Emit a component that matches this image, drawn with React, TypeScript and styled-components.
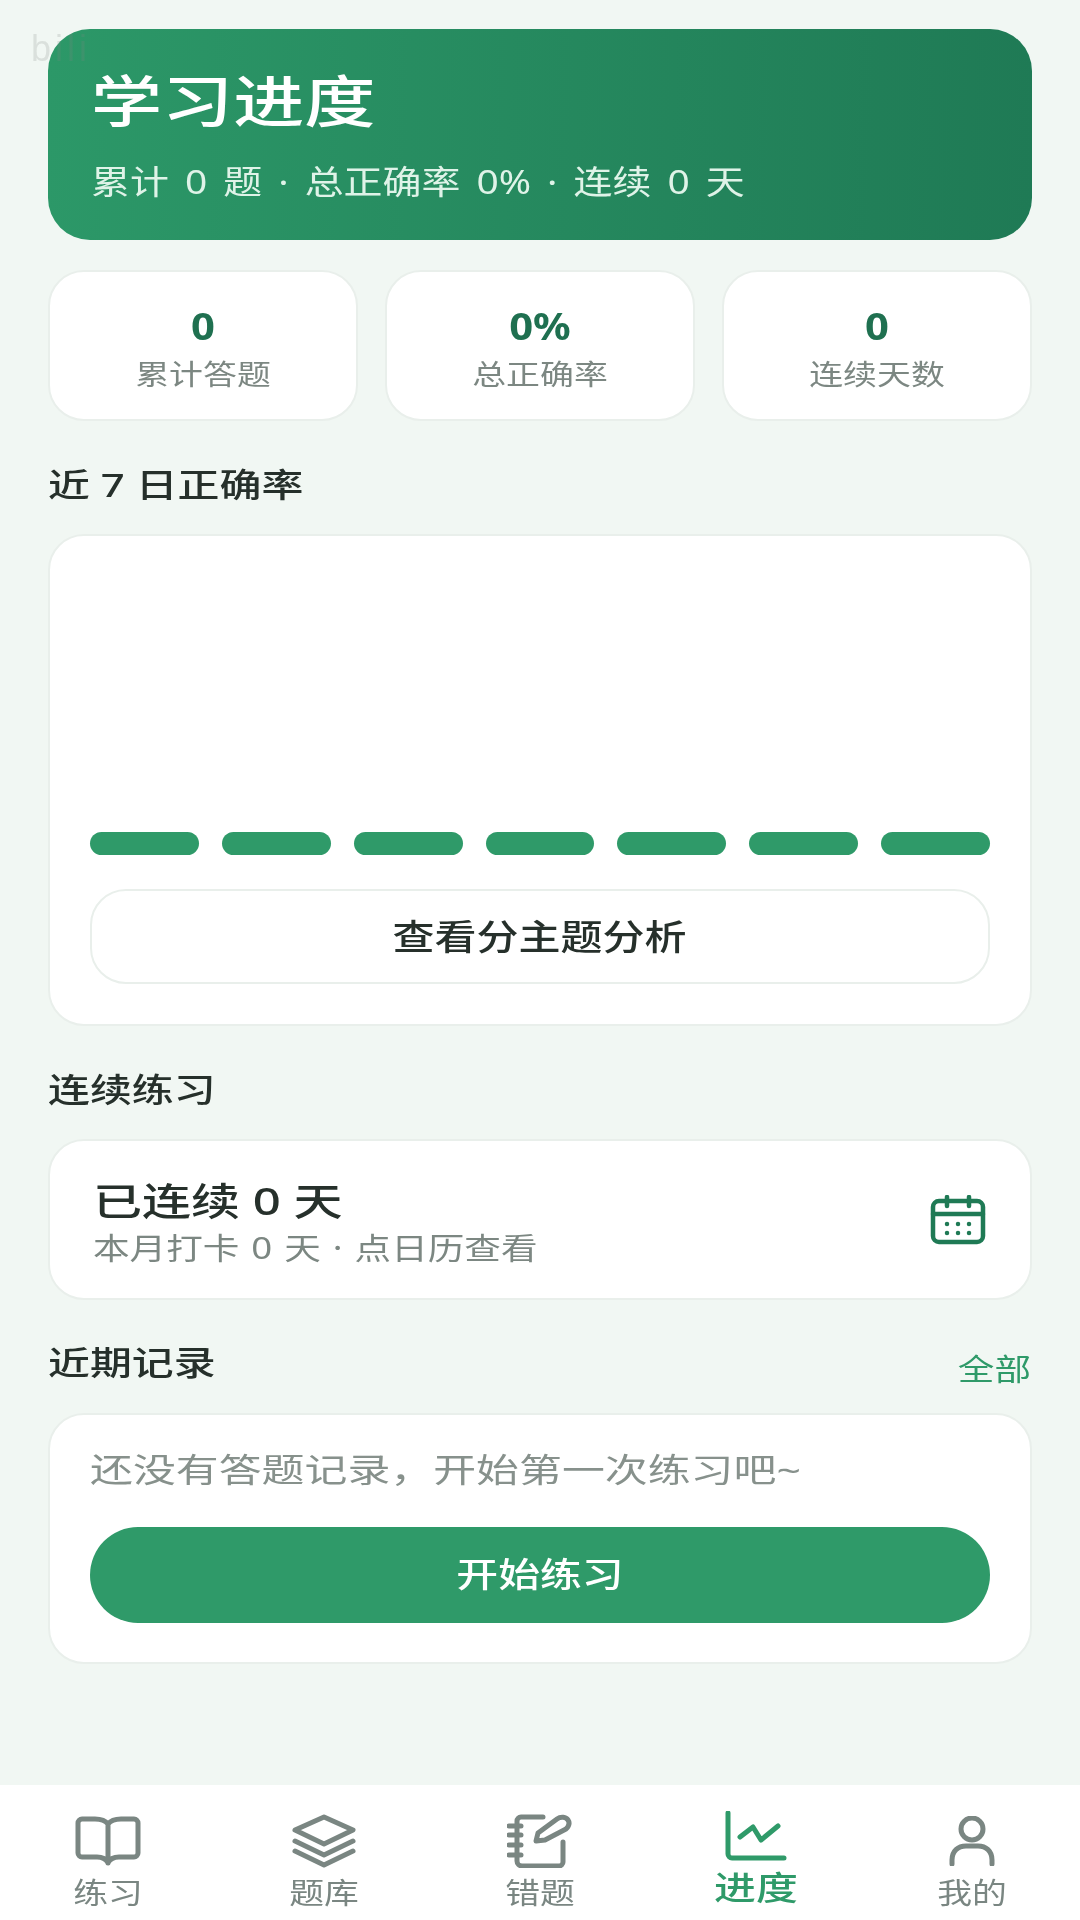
import React from "react";
import styled, { createGlobalStyle } from "styled-components";

const Global = createGlobalStyle`
  html, body { margin: 0; padding: 0; background: #f1f7f3; }
  * { box-sizing: border-box; }
  body { font-family: "Noto Sans", "Noto Sans CJK SC", sans-serif; }
`;

const Screen = styled.div`
  position: relative;
  width: 1080px;
  height: 1920px;
  overflow: hidden;
  display: flex;
  flex-direction: column;
  background: #f1f7f3;
  filter: blur(0.5px);
`;
const Watermark = styled.span`
  position: absolute;
  left: 31px;
  top: 31px;
  z-index: 1;
  font: 36px/36px "Liberation Sans", sans-serif;
  letter-spacing: 4px;
  color: rgba(130, 135, 132, 0.2);
`;
const Content = styled.main`
  position: relative;
  flex: 1;
  padding: 29px 48px 0;
  display: flex;
  flex-direction: column;
`;
const Hero = styled.section`
  height: 211px;
  border-radius: 42px;
  padding: 41px 43px 0;
  background: linear-gradient(92deg, #2c9868 0%, #1f7a55 100%);
  color: #fff;
`;
const HeroTitle = styled.h1`
  margin: 0;
  font-size: 56px;
  font-weight: 500;
  line-height: 60px;
  transform: scaleX(1.27);
  transform-origin: left center;
`;
const HeroSub = styled.p`
  margin: 30px 0 0;
  font-size: 33px;
  line-height: 44px;
  word-spacing: 5px;
  color: #dff3e8;
  transform: scaleX(1.18);
  transform-origin: left center;
`;
const Stats = styled.div`
  display: grid;
  grid-template-columns: repeat(3, 1fr);
  gap: 27px;
  margin-top: 30px;
`;
const Card = styled.section`
  background: #fff;
  border: 2px solid #e9efeb;
  border-radius: 36px;
`;
const Stat = styled(Card)`
  height: 151px;
  display: flex;
  flex-direction: column;
  align-items: center;
  padding-top: 31px;
`;
const StatValue = styled.div`
  font-size: 38px;
  line-height: 44px;
  font-weight: 700;
  color: #1f7050;
  transform: scaleX(1.1);
`;
const StatLabel = styled.div`
  margin-top: 8px;
  font-size: 28px;
  line-height: 38px;
  color: #7c8782;
  transform: scaleX(1.21);
`;
const Heading = styled.h2`
  margin: 0;
  font-size: 33px;
  line-height: 44px;
  font-weight: 500;
  color: #26302b;
  transform: scaleX(1.27);
  transform-origin: left center;
`;
const ChartHeading = styled(Heading)`
  margin-top: 42px;
`;
const ChartCard = styled(Card)`
  margin-top: 27px;
  height: 492px;
  padding: 296px 40px 0;
`;
const Bars = styled.div`
  display: grid;
  grid-template-columns: repeat(7, 1fr);
  gap: 23px;
`;
const Bar = styled.div`
  height: 23px;
  border-radius: 12px;
  background: #2f9a69;
`;
const OutlineButton = styled.button`
  display: block;
  width: 100%;
  height: 95px;
  margin-top: 34px;
  padding: 0 0 4px;
  background: #fff;
  border: 2px solid #e9efeb;
  border-radius: 36px;
  font: 500 35px "Noto Sans CJK SC", sans-serif;
  color: #26302b;
`;
const ButtonText = styled.span<{ $stretch: number }>`
  display: inline-block;
  transform: scaleX(${p => p.$stretch});
`;
const StreakHeading = styled(Heading)`
  margin-top: 42px;
`;
const StreakCard = styled(Card)`
  margin-top: 27px;
  height: 161px;
  padding: 0 44px 0 43px;
  display: flex;
  align-items: center;
  justify-content: space-between;
`;
const StreakText = styled.div`
  padding-top: 5px;
`;
const StreakTitle = styled.div`
  font-size: 38px;
  line-height: 50px;
  font-weight: 500;
  color: #26302b;
  transform: scaleX(1.29);
  transform-origin: left center;
`;
const StreakSub = styled.div`
  margin-top: 2px;
  font-size: 30px;
  line-height: 42px;
  word-spacing: 2px;
  color: #7c8782;
  transform: scaleX(1.22);
  transform-origin: left center;
`;
const SectionRow = styled.div`
  display: flex;
  align-items: flex-end;
  justify-content: space-between;
  margin-top: 41px;
`;
const AllLink = styled.span`
  margin: 0 1px -4px 0;
  font-size: 30px;
  line-height: 40px;
  color: #2f9a69;
  transform: scaleX(1.22);
  transform-origin: right center;
`;
const RecordCard = styled(Card)`
  margin-top: 28px;
  height: 251px;
  padding: 33px 40px 0;
`;
const EmptyText = styled.p`
  margin: 0;
  font-size: 33px;
  line-height: 44px;
  color: #87918c;
  transform: scaleX(1.3);
  transform-origin: left center;
`;
const PrimaryButton = styled.button`
  display: block;
  width: 100%;
  height: 96px;
  margin-top: 35px;
  padding: 0 0 6px;
  border: 0;
  border-radius: 48px;
  background: #2f9a69;
  color: #fff;
  font: 500 34px "Noto Sans CJK SC", sans-serif;
`;
const Nav = styled.nav`
  height: 135px;
  background: #fff;
  display: grid;
  grid-template-columns: repeat(5, 1fr);
`;
const Tab = styled.div<{ $active?: boolean }>`
  display: flex;
  flex-direction: column;
  align-items: center;
  padding-top: ${p => (p.$active ? "24px" : "29px")};
  color: ${p => (p.$active ? "#2f9a69" : "#7a8682")};
`;
const IconSlot = styled.div`
  height: 54px;
  display: flex;
  align-items: center;
`;
const TabLabel = styled.span<{ $active?: boolean }>`
  margin-top: 6px;
  font-size: ${p => (p.$active ? "33px" : "29px")};
  font-weight: ${p => (p.$active ? 500 : 400)};
  line-height: 38px;
  transform: scaleX(${p => (p.$active ? 1.27 : 1.2)});
`;

const Icon = styled.svg`
  display: block;
  fill: none;
  stroke: currentColor;
  stroke-width: 5;
  stroke-linecap: round;
  stroke-linejoin: round;
`;
const CalendarSvg = styled(Icon)`
  color: #1f7a55;
  stroke-width: 4.5;
`;

const BookIcon = () => (
  <Icon width="66" height="50" viewBox="0 0 66 50">
    <path d="M33 8C30 4 26 3 20 3H7a4 4 0 0 0-4 4v30a4 4 0 0 0 4 4h15c5 0 9 2 11 6 2-4 6-6 11-6h15a4 4 0 0 0 4-4V7a4 4 0 0 0-4-4H46c-6 0-10 1-13 5zM33 8v39" />
  </Icon>
);
const LayersIcon = () => (
  <Icon width="66" height="54" viewBox="0 0 66 54">
    <path d="M33 3 62 16 33 30 4 16z" />
    <path d="M4 27l29 14 29-14" />
    <path d="M4 37l29 14 29-14" />
  </Icon>
);
const NotebookIcon = () => (
  <Icon width="66" height="54" viewBox="0 0 66 54">
    <path d="M36 3H14a4 4 0 0 0-4 4v40a5 5 0 0 0 5 5h37a4 4 0 0 0 4-4V28" />
    <path d="M2 12h12M2 21h12M2 31h12M2 41h12" />
    <path d="M29 27l2-8L50 5c4-3 9-2 11 1 2 3 1 6-2 9L38 26z" />
  </Icon>
);
const ChartIcon = () => (
  <Icon width="62" height="50" viewBox="0 0 62 50">
    <path d="M3 2v41a4 4 0 0 0 4 4h52" />
    <path d="M15 26l13-10 8 13 17-14" />
  </Icon>
);
const UserIcon = () => (
  <Icon width="48" height="50" viewBox="0 0 48 50">
    <circle cx="24" cy="13" r="11" />
    <path d="M4 48v-4c0-9 6-14 14-14h12c8 0 14 5 14 14v4" />
  </Icon>
);
const CalendarIcon = () => (
  <CalendarSvg width="56" height="50" viewBox="0 0 56 50">
    <rect x="3" y="6" width="50" height="41" rx="6" />
    <path d="M3 19h50M17 2v9M39 2v9" />
    <path d="M17 29h.01M28 29h.01M39 29h.01M17 38h.01M28 38h.01M39 38h.01" />
  </CalendarSvg>
);

export default function App() {
  return (
    <Screen>
      <Global />
      <Watermark>bili</Watermark>
      <Content>
        <Hero>
          <HeroTitle>学习进度</HeroTitle>
          <HeroSub>累计 0 题 · 总正确率 0% · 连续 0 天</HeroSub>
        </Hero>
        <Stats>
          <Stat><StatValue>0</StatValue><StatLabel>累计答题</StatLabel></Stat>
          <Stat><StatValue>0%</StatValue><StatLabel>总正确率</StatLabel></Stat>
          <Stat><StatValue>0</StatValue><StatLabel>连续天数</StatLabel></Stat>
        </Stats>
        <ChartHeading>近 7 日正确率</ChartHeading>
        <ChartCard>
          <Bars>{Array.from({ length: 7 }, (_, i) => <Bar key={i} />)}</Bars>
          <OutlineButton><ButtonText $stretch={1.2}>查看分主题分析</ButtonText></OutlineButton>
        </ChartCard>
        <StreakHeading>连续练习</StreakHeading>
        <StreakCard>
          <StreakText>
            <StreakTitle>已连续 0 天</StreakTitle>
            <StreakSub>本月打卡 0 天 · 点日历查看</StreakSub>
          </StreakText>
          <CalendarIcon />
        </StreakCard>
        <SectionRow>
          <Heading>近期记录</Heading>
          <AllLink>全部</AllLink>
        </SectionRow>
        <RecordCard>
          <EmptyText>还没有答题记录，开始第一次练习吧~</EmptyText>
          <PrimaryButton><ButtonText $stretch={1.23}>开始练习</ButtonText></PrimaryButton>
        </RecordCard>
      </Content>
      <Nav>
        <Tab><IconSlot><BookIcon /></IconSlot><TabLabel>练习</TabLabel></Tab>
        <Tab><IconSlot><LayersIcon /></IconSlot><TabLabel>题库</TabLabel></Tab>
        <Tab><IconSlot><NotebookIcon /></IconSlot><TabLabel>错题</TabLabel></Tab>
        <Tab $active><IconSlot><ChartIcon /></IconSlot><TabLabel $active>进度</TabLabel></Tab>
        <Tab><IconSlot><UserIcon /></IconSlot><TabLabel>我的</TabLabel></Tab>
      </Nav>
    </Screen>
  );
}
